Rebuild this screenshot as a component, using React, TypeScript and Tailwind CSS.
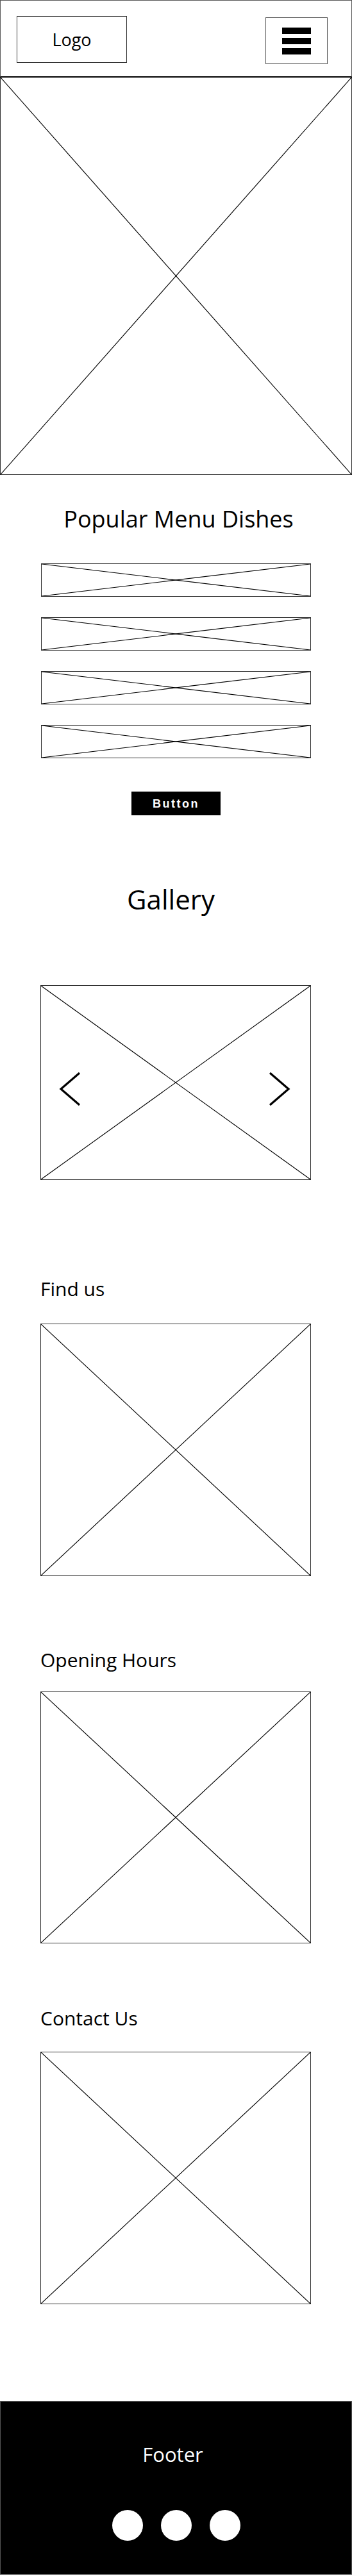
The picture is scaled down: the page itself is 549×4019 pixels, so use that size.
import { ReactNode } from 'react'

function Placeholder({ className = '', children }: { className?: string; children?: ReactNode }) {
  return (
    <div className={`relative border-[1.5px] border-[#2a2a2a] ${className}`}>
      <svg
        className="absolute inset-0 h-full w-full"
        viewBox="0 0 100 100"
        preserveAspectRatio="none"
      >
        <line x1="0" y1="0" x2="100" y2="100" stroke="#000" strokeWidth="1.15" vectorEffect="non-scaling-stroke" />
        <line x1="100" y1="0" x2="0" y2="100" stroke="#000" strokeWidth="1.15" vectorEffect="non-scaling-stroke" />
      </svg>
      {children}
    </div>
  )
}

function Chevron({ dir }: { dir: 'left' | 'right' }) {
  const points = dir === 'left' ? '32,2 3,27 32,52' : '2,2 31,27 2,52'
  return (
    <svg width="34" height="54" viewBox="0 0 34 54" className="relative">
      <polyline points={points} fill="none" stroke="#000" strokeWidth="3.2" />
    </svg>
  )
}

function SectionBlock({ title, height, gap }: { title: string; height: string; gap: string }) {
  return (
    <>
      <h2 className="pl-[63px] text-[30px] leading-none font-normal">{title}</h2>
      <Placeholder className={`${gap} ml-[63px] w-[422px] ${height}`} />
    </>
  )
}

export default function App() {
  return (
    <div className="w-[549px] bg-white text-black" style={{ fontFamily: '"Open Sans", "Liberation Sans", sans-serif' }}>
      {/* header */}
      <header className="flex h-[121px] items-start justify-between border-x border-t border-b-2 border-x-[#555] border-t-[#555] border-b-black">
        <div className="ml-[25px] mt-[24px] flex h-[73px] w-[172px] items-center justify-center border-[1.5px] border-[#333]">
          <span className="text-[27px] leading-none">Logo</span>
        </div>
        <div className="mr-[37px] mt-[26px] flex h-[73px] w-[97px] flex-col items-center justify-center gap-[6px] border-[1.5px] border-[#555]">
          <span className="h-[10px] w-[45px] bg-black" />
          <span className="h-[10px] w-[45px] bg-black" />
          <span className="h-[10px] w-[45px] bg-black" />
        </div>
      </header>

      {/* hero */}
      <Placeholder className="h-[620px] w-full border-t-0" />

      {/* popular dishes */}
      <h2 className="pl-[8px] pt-[51px] text-center text-[36px] leading-none font-normal">Popular Menu Dishes</h2>
      <div className="mt-[51px] flex flex-col items-center gap-[32px]">
        {[0, 1, 2, 3].map((i) => (
          <Placeholder key={i} className="h-[52px] w-[421px]" />
        ))}
      </div>
      <button className="mx-auto mt-[52px] flex h-[37px] w-[139px] items-center justify-center bg-black text-[18px] leading-none font-bold tracking-[0.14em] text-white" style={{ fontFamily: '"Liberation Sans", Arial, sans-serif' }}>
        Button
      </button>

      {/* gallery */}
      <h2 className="mt-[110px] pr-[16px] text-center text-[42px] leading-none font-normal">Gallery</h2>
      <Placeholder className="ml-[63px] mt-[113px] h-[304px] w-[422px]">
        <div className="relative flex h-full items-center justify-between pl-[28px] pr-[31px] pt-[20px]">
          <Chevron dir="left" />
          <Chevron dir="right" />
        </div>
      </Placeholder>

      <div className="mt-[155px]">
        <SectionBlock title="Find us" height="h-[394px]" gap="mt-[39px]" />
      </div>
      <div className="mt-[116px]">
        <SectionBlock title="Opening Hours" height="h-[393px]" gap="mt-[34px]" />
      </div>
      <div className="mt-[102px]">
        <SectionBlock title="Contact Us" height="h-[394px]" gap="mt-[37px]" />
      </div>

      {/* footer */}
      <footer className="mt-[151px] h-[271px] border border-[#555] bg-black pt-[67px]">
        <p className="pr-[10px] text-center text-[31px] leading-none text-white">Footer</p>
        <div className="mt-[71px] flex justify-center gap-[28px]">
          <span className="h-12 w-12 rounded-full bg-white" />
          <span className="h-12 w-12 rounded-full bg-white" />
          <span className="h-12 w-12 rounded-full bg-white" />
        </div>
      </footer>
    </div>
  )
}
